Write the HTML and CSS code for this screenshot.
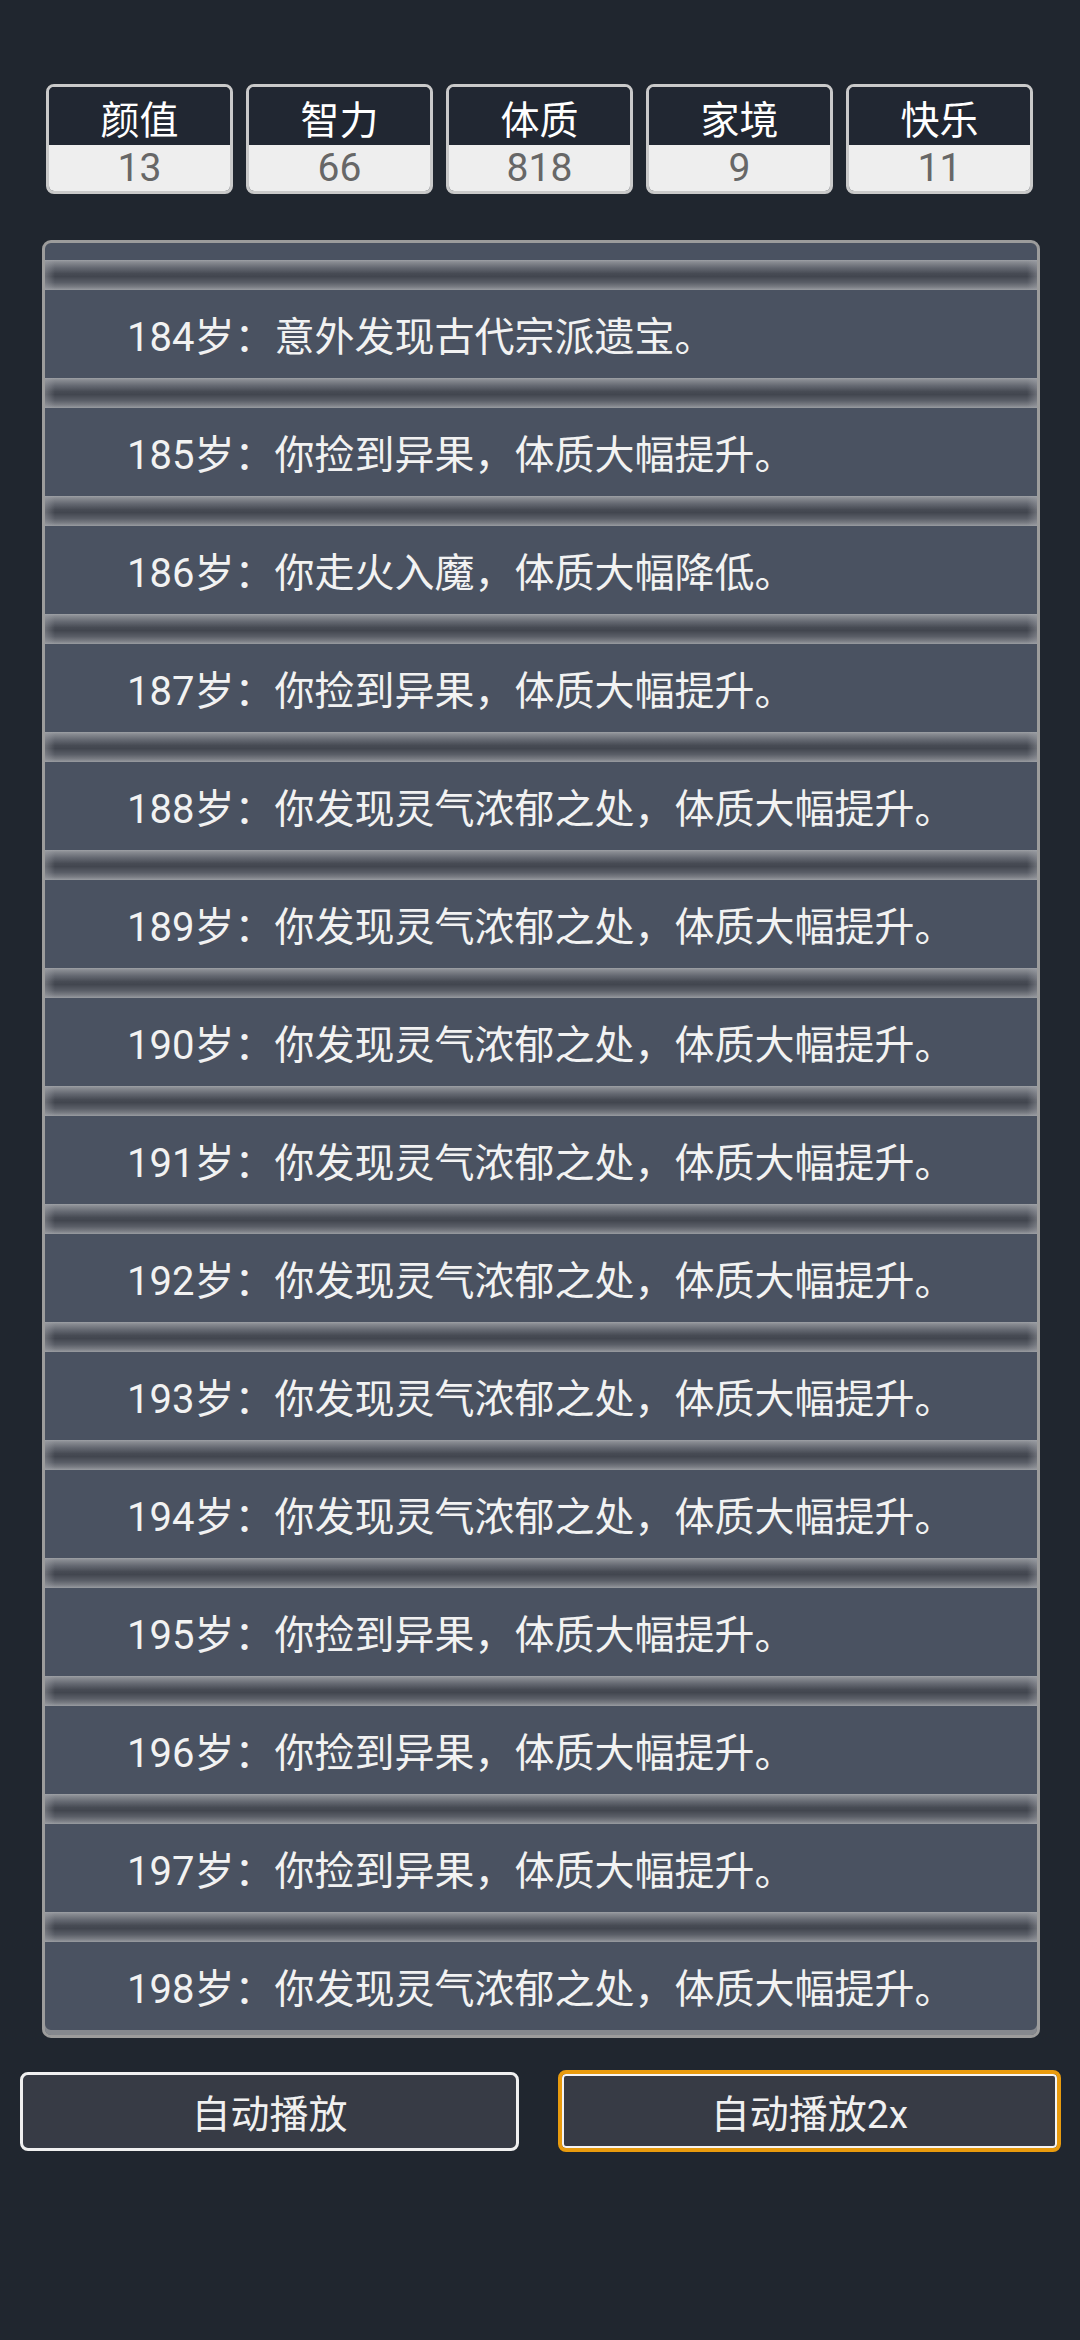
FILE: index.html
```html
<!DOCTYPE html>
<html lang="zh-CN">
<head>
    <meta charset="UTF-8">
    <meta name="viewport" content="width=device-width, initial-scale=1.0">
    <title>人生重开</title>
    <link rel="stylesheet" href="styles.css">
</head>
<body>

    <div class="stats">
        <div class="stat"><div class="stat-name">颜值</div><div class="stat-value">13</div></div>
        <div class="stat"><div class="stat-name">智力</div><div class="stat-value">66</div></div>
        <div class="stat"><div class="stat-name">体质</div><div class="stat-value">818</div></div>
        <div class="stat"><div class="stat-name">家境</div><div class="stat-value">9</div></div>
        <div class="stat"><div class="stat-name">快乐</div><div class="stat-value">11</div></div>
    </div>

    <div class="log">
        <div class="log-top"></div>
        <div class="sep"></div><div class="row">184岁：意外发现古代宗派遗宝。</div>
        <div class="sep"></div><div class="row">185岁：你捡到异果，体质大幅提升。</div>
        <div class="sep"></div><div class="row">186岁：你走火入魔，体质大幅降低。</div>
        <div class="sep"></div><div class="row">187岁：你捡到异果，体质大幅提升。</div>
        <div class="sep"></div><div class="row">188岁：你发现灵气浓郁之处，体质大幅提升。</div>
        <div class="sep"></div><div class="row">189岁：你发现灵气浓郁之处，体质大幅提升。</div>
        <div class="sep"></div><div class="row">190岁：你发现灵气浓郁之处，体质大幅提升。</div>
        <div class="sep"></div><div class="row">191岁：你发现灵气浓郁之处，体质大幅提升。</div>
        <div class="sep"></div><div class="row">192岁：你发现灵气浓郁之处，体质大幅提升。</div>
        <div class="sep"></div><div class="row">193岁：你发现灵气浓郁之处，体质大幅提升。</div>
        <div class="sep"></div><div class="row">194岁：你发现灵气浓郁之处，体质大幅提升。</div>
        <div class="sep"></div><div class="row">195岁：你捡到异果，体质大幅提升。</div>
        <div class="sep"></div><div class="row">196岁：你捡到异果，体质大幅提升。</div>
        <div class="sep"></div><div class="row">197岁：你捡到异果，体质大幅提升。</div>
        <div class="sep"></div><div class="row">198岁：你发现灵气浓郁之处，体质大幅提升。</div>
    </div>

    <div class="controls">
        <button class="button">自动播放</button>
        <button class="button active">自动播放2x</button>
    </div>

</body>
</html>
```

FILE: styles.css
```css
body {
    margin: 0;
    width: 1080px;
    height: 2340px;
    background-color: #20262f;
    font-family: Roboto, "Noto Sans CJK SC", sans-serif;
    color: #f2f2f2;
    overflow: hidden;
}
.stats {
    display: flex;
    gap: 13px;
    padding: 84px 47px 0 46px;
}
.stat {
    flex: 1;
    height: 104px;
    border: 3px solid #c9c9c9;
    border-radius: 8px;
    overflow: hidden;
    display: flex;
    flex-direction: column;
}
.stat-name {
    height: 58px;
    background-color: #212732;
    color: #ffffff;
    font-size: 39px;
    display: flex;
    align-items: center;
    justify-content: center;
    padding-top: 2px;
    box-sizing: border-box;
}
.stat-value {
    flex: 1;
    background-color: #eeeeee;
    color: #676767;
    font-size: 39px;
    display: flex;
    align-items: center;
    justify-content: center;
}
.log {
    margin: 46px 40px 0 42px;
    height: 1798px;
    box-sizing: border-box;
    border: 3px solid #9c9c9c;
    border-radius: 9px;
    background-color: #4a5261;
    overflow: hidden;
    padding-bottom: 5px;
    box-shadow: inset 0 -5px 0 #85888e;
}
.log-top {
    height: 17px;
}
.sep {
    height: 30px;
    background:
        linear-gradient(to right, rgba(160, 162, 168, 0.45), rgba(160, 162, 168, 0) 10px, rgba(160, 162, 168, 0) calc(100% - 10px), rgba(160, 162, 168, 0.45)),
        linear-gradient(to bottom, #9ea1a6 0, #8a8d93 6%, #666a73 25%, #474b54 45%, #42464f 55%, #5a5e67 75%, #7a7d84 90%, #999ca1 100%);
}
.row {
    height: 88px;
    display: flex;
    align-items: center;
    padding-left: 82px;
    font-size: 40px;
    color: #f2f2f2;
    white-space: nowrap;
    text-spacing-trim: space-all;
}
.controls {
    display: flex;
    align-items: center;
    gap: 39px;
    padding: 32px 19px 0 20px;
}
.button {
    flex: 0 0 499px;
    height: 79px;
    box-sizing: border-box;
    background-color: #373b45;
    color: #f0f0f0;
    border: 3px solid #f0f0f0;
    border-radius: 8px;
    font-family: Roboto, "Noto Sans CJK SC", sans-serif;
    font-size: 39px;
    padding: 0;
}
.button.active {
    flex-basis: 503px;
    height: 82px;
    border: 4px solid #e89b0e;
    box-shadow: inset 0 0 0 2px #f4f4f4;
}
```
